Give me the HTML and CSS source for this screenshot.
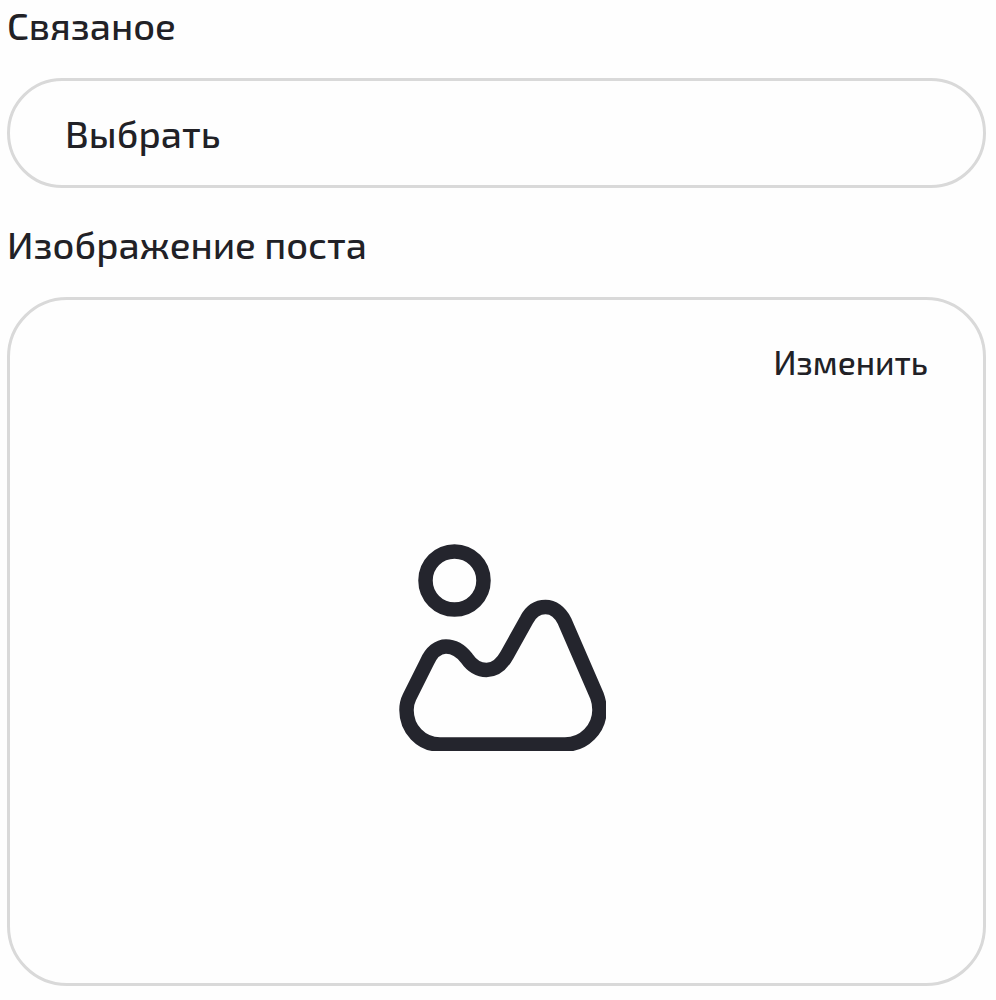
FILE: index.html
```html
<!DOCTYPE html>
<html lang="ru">
<head>
  <meta charset="utf-8">
  <meta name="viewport" content="width=device-width, initial-scale=1">
  <title>Пост</title>
  <link rel="stylesheet" href="styles.css">
</head>
<body>
<form class="post-form">
  <div class="field">
    <label class="field-label" for="related">Связаное</label>
    <select class="select" id="related" name="related">
      <option>Выбрать</option>
    </select>
  </div>
  <div class="field">
    <h2 class="field-label" id="image-title">Изображение поста</h2>
    <section class="image-card" aria-labelledby="image-title">
      <button class="edit-button" type="button">Изменить</button>
      <svg class="image-icon" viewBox="0 0 219 219" fill="none" stroke="currentColor" stroke-width="14.5" stroke-linejoin="round" aria-hidden="true">
        <circle cx="67.5" cy="48.5" r="29"/>
        <path d="M53 212.500C34 212.500 19.500 197 19.500 178C19.500 173 20.500 169 22.500 165L40 130C44.500 120 51.500 114.500 59 114.500C67 114.500 74 119 79.500 126C85 134 91 138 99.500 138C108 138 114.500 133 120 123L139.500 88C144 79 151 75 158.500 75C166 75 173 80 177.500 89L210 164C211.500 168 212.500 173 212.500 178C212.500 197 197 212.500 178 212.500Z"/>
      </svg>
    </section>
  </div>
</form>
</body>
</html>
```
FILE: styles.css
```css
* {
  box-sizing: border-box;
}
body {
  margin: 0;
  padding: 1px 10px 14px 7px;
  font-family: "Exo 2", "Noto Sans", sans-serif;
  font-weight: 500;
  color: #212126;
  background: #fefefe;
}
.post-form {
  display: flex;
  flex-direction: column;
  gap: 32px;
}
.field {
  display: flex;
  flex-direction: column;
  gap: 29px;
}
.field-label {
  margin: 0;
  font-size: 38px;
  font-weight: inherit;
  line-height: 48px;
}
.select {
  width: 100%;
  height: 110px;
  padding: 0 55px;
  border: 3px solid #d9d9d9;
  border-radius: 60px;
  background: transparent;
  color: inherit;
  font-family: inherit;
  font-size: 38px;
  font-weight: inherit;
  appearance: none;
  cursor: pointer;
}
.image-card {
  display: grid;
  place-items: center;
  aspect-ratio: 979 / 689;
  padding: 42px 55px;
  border: 3px solid #d9d9d9;
  border-radius: 60px;
}
.edit-button,
.image-icon {
  grid-area: 1 / 1;
}
.edit-button {
  place-self: start end;
  padding: 0;
  border: none;
  background: none;
  color: inherit;
  font-family: inherit;
  font-size: 33px;
  font-weight: inherit;
  line-height: 40px;
  cursor: pointer;
}
.image-icon {
  width: 219px;
  height: 219px;
  color: #24252d;
}
```
